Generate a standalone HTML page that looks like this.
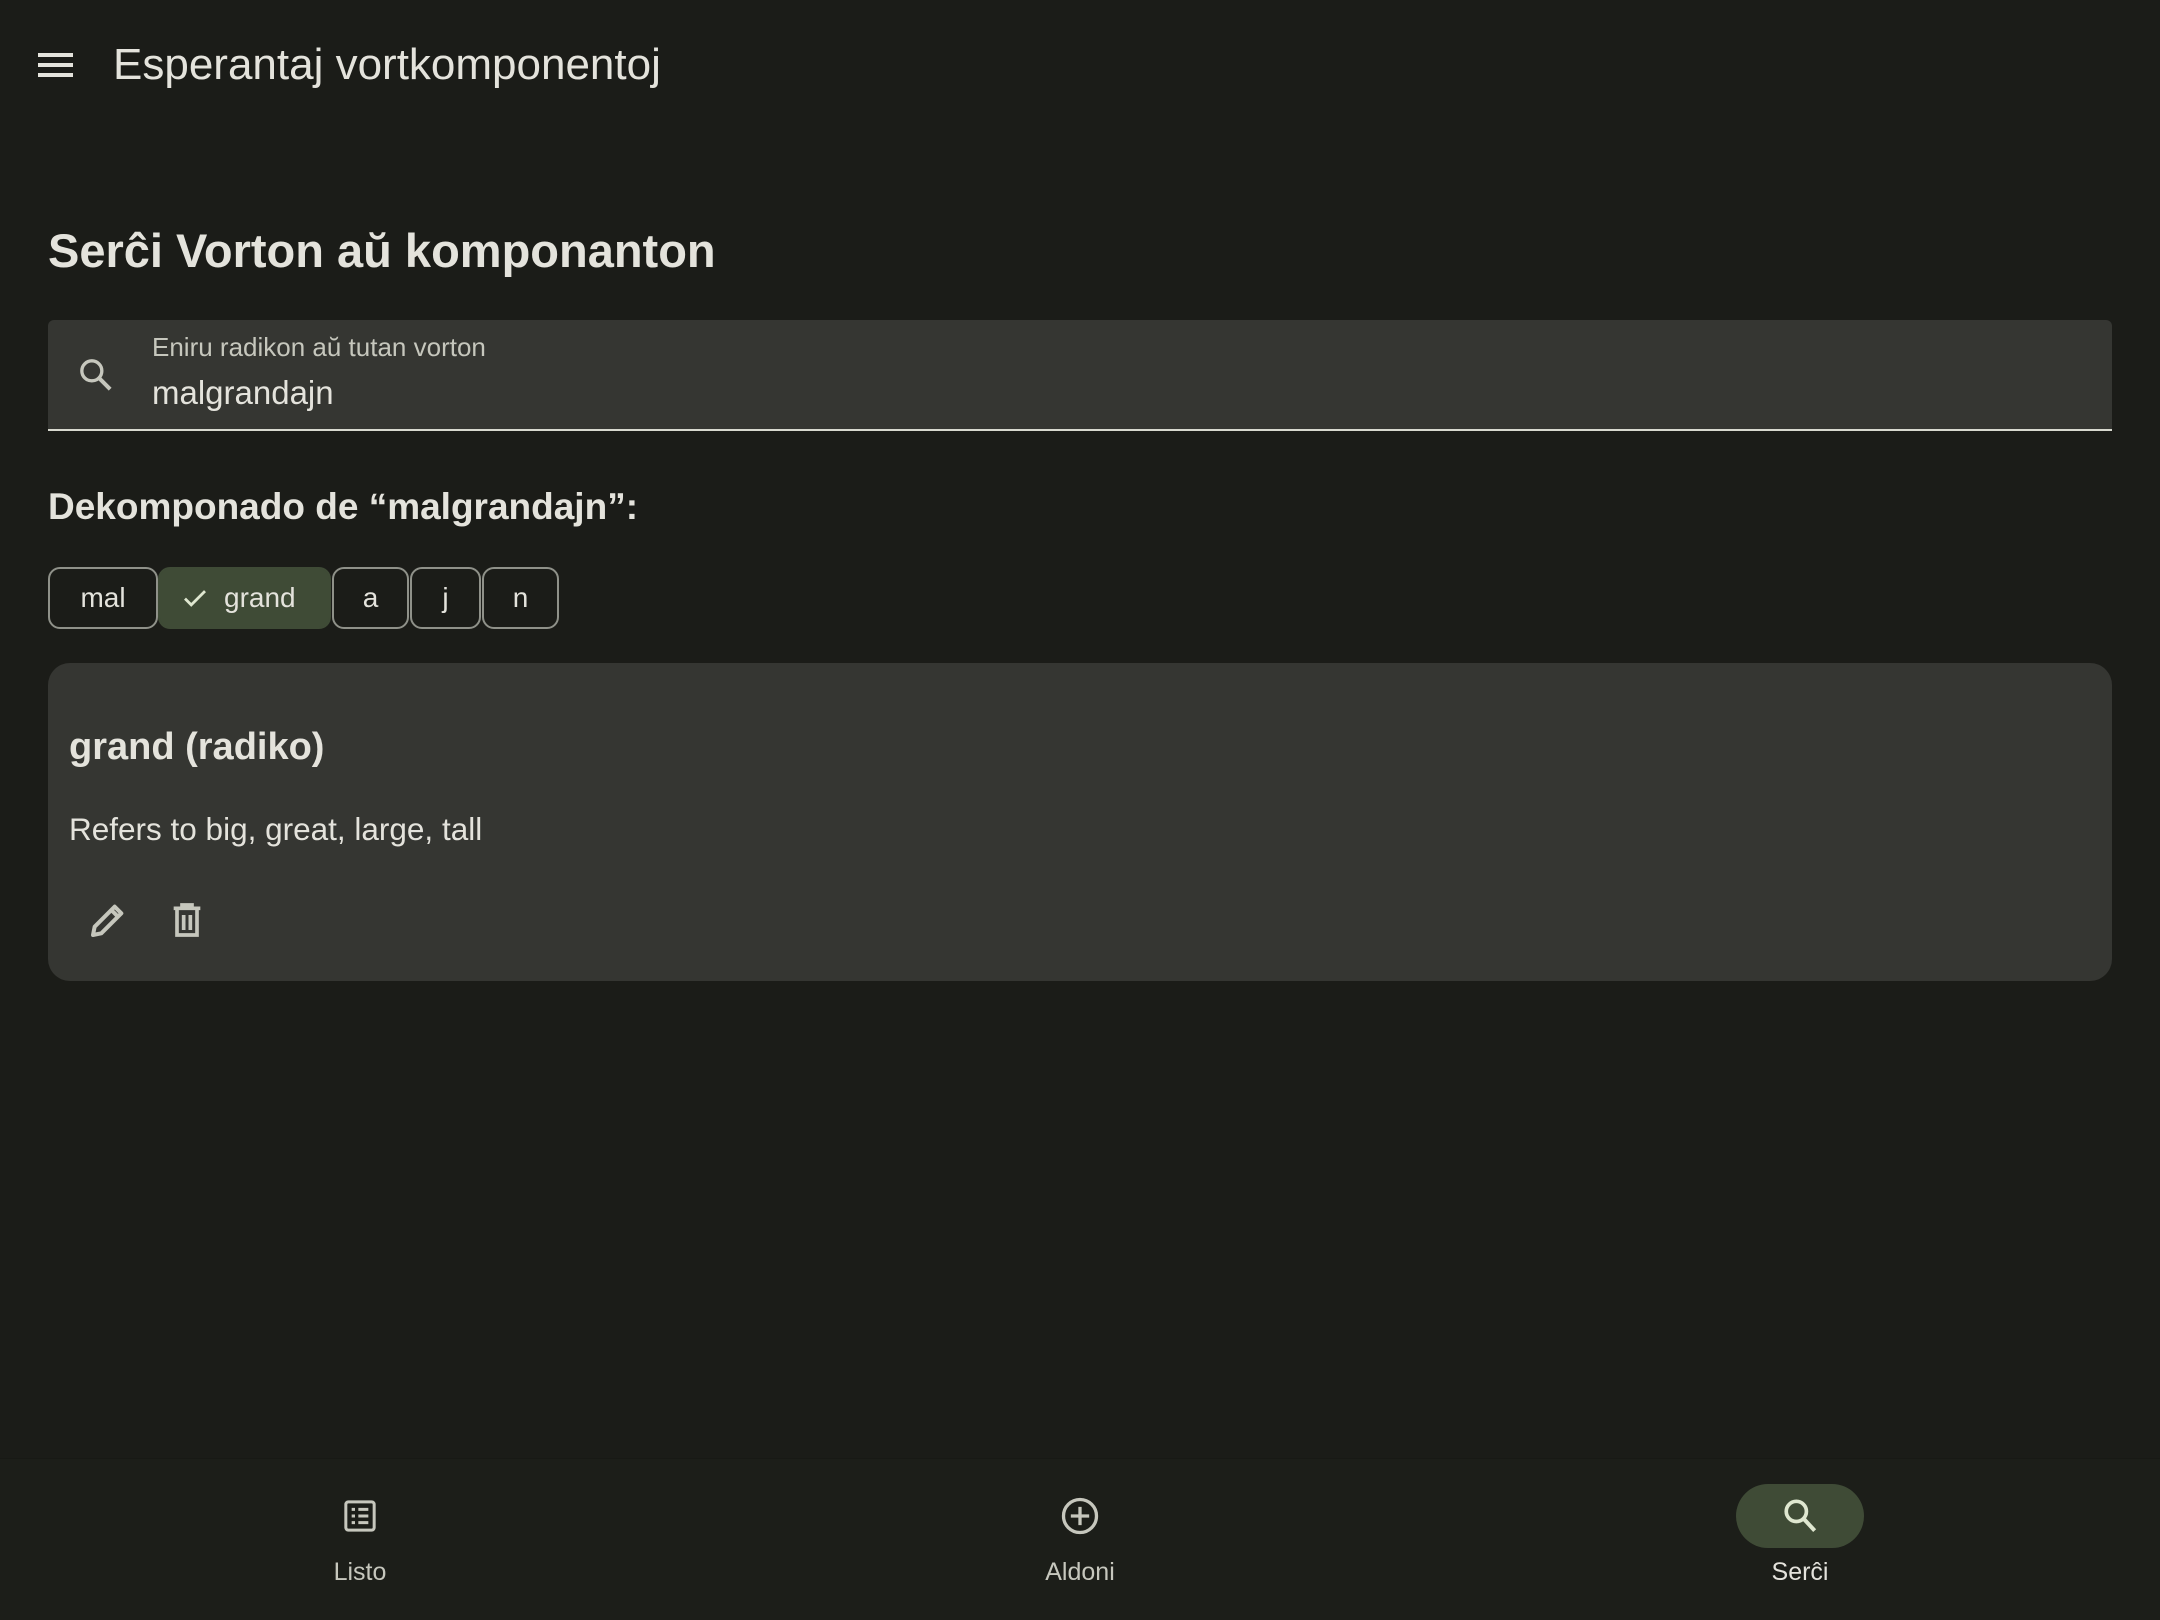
<!DOCTYPE html>
<html><head><meta charset="utf-8"><style>
*{margin:0;padding:0;box-sizing:border-box}
body{width:2160px;height:1620px;background:#1b1c18;color:#e4e3dc;font-family:"Liberation Sans",sans-serif;position:relative;overflow:hidden}
.a{position:absolute;white-space:nowrap}
.chip{position:absolute;top:567px;height:62px;border:2px solid #8f9189;border-radius:12px;font-size:28px;color:#e4e3dc;display:flex;align-items:center;justify-content:center}
</style></head><body>
<svg class="a" style="left:37px;top:51px" width="38" height="28" viewBox="0 0 38 28"><rect x="1" y="2" width="35" height="4" fill="#e4e3dc"/><rect x="1" y="12" width="35" height="4" fill="#e4e3dc"/><rect x="1" y="22" width="35" height="4" fill="#e4e3dc"/></svg>
<div class="a" style="left:113px;top:40px;font-size:44px">Esperantaj vortkomponentoj</div>
<div class="a" style="left:48px;top:223px;font-size:47px;font-weight:bold">Serĉi Vorton aŭ komponanton</div>
<div class="a" style="left:48px;top:320px;width:2064px;height:111px;background:#353632;border-radius:6px 6px 0 0;border-bottom:2px solid #d8d9cf"></div>
<svg class="a" style="left:76px;top:355px" width="40" height="40" viewBox="0 0 24 24"><circle cx="9.5" cy="9.5" r="6" fill="none" stroke="#c6c7bd" stroke-width="2"/><path d="M14 14l6.5 6.5" stroke="#c6c7bd" stroke-width="2.4"/></svg>
<div class="a" style="left:152px;top:332px;font-size:26px;color:#c6c7bd">Eniru radikon aŭ tutan vorton</div>
<div class="a" style="left:152px;top:374px;font-size:33px">malgrandajn</div>
<div class="a" style="left:48px;top:486px;font-size:37px;font-weight:bold">Dekomponado de “malgrandajn”:</div>
<div class="chip" style="left:48px;width:110px">mal</div>
<div class="chip" style="left:158px;width:173px;background:#3f4b36;border-color:#3f4b36;justify-content:flex-start;padding-left:20px"><svg width="30" height="30" viewBox="0 0 24 24"><path d="M4 12.5l5 5L20 6.5" fill="none" stroke="#dfe7d0" stroke-width="2.2"/></svg><span style="margin-left:14px">grand</span></div>
<div class="chip" style="left:332px;width:77px">a</div>
<div class="chip" style="left:410px;width:71px">j</div>
<div class="chip" style="left:482px;width:77px">n</div>
<div class="a" style="left:48px;top:663px;width:2064px;height:318px;background:#353632;border-radius:22px"></div>
<div class="a" style="left:69px;top:726px;font-size:38px;font-weight:bold">grand (radiko)</div>
<div class="a" style="left:69px;top:811px;font-size:31.5px">Refers to big, great, large, tall</div>
<svg class="a" style="left:88px;top:900px" width="40" height="40" viewBox="0 0 24 24"><path d="M3 21l1-5L16 4l4 4L8 20z M14 6l4 4" fill="none" stroke="#c6c7bd" stroke-width="2.4" stroke-linejoin="round"/></svg>
<svg class="a" style="left:167px;top:900px" width="40" height="40" viewBox="0 0 24 24"><path d="M4 5h16M9 5V3h6v2M6 5v16h12V5M10 9v9M14 9v9" fill="none" stroke="#c6c7bd" stroke-width="2.2"/></svg>
<div class="a" style="left:0;top:1458px;width:2160px;height:162px;background:#1c1e19;border-top:1px solid #181915"></div>
<svg class="a" style="left:340px;top:1496px" width="40" height="40" viewBox="0 0 24 24"><rect x="3.5" y="3.5" width="17" height="17" rx="1.5" fill="none" stroke="#c6c7bd" stroke-width="1.8"/><path d="M7 8h2M11 8h6M7 12h2M11 12h6M7 16h2M11 16h6" stroke="#c6c7bd" stroke-width="1.8"/></svg>
<div class="a" style="left:300px;top:1558px;width:120px;text-align:center;font-size:25px;color:#c6c7bd">Listo</div>
<svg class="a" style="left:1058px;top:1494px" width="44" height="44" viewBox="0 0 24 24"><circle cx="12" cy="12" r="9" fill="none" stroke="#c6c7bd" stroke-width="1.8"/><path d="M12 7v10M7 12h10" stroke="#c6c7bd" stroke-width="1.8"/></svg>
<div class="a" style="left:1020px;top:1558px;width:120px;text-align:center;font-size:25px;color:#c6c7bd">Aldoni</div>
<div class="a" style="left:1736px;top:1484px;width:128px;height:64px;border-radius:32px;background:#3f4b36"></div>
<svg class="a" style="left:1778px;top:1494px" width="44" height="44" viewBox="0 0 24 24"><circle cx="10" cy="9.5" r="5.5" fill="none" stroke="#dfe7d0" stroke-width="2"/><path d="M14 13.5l6 6.5" stroke="#dfe7d0" stroke-width="2.2"/></svg>
<div class="a" style="left:1740px;top:1558px;width:120px;text-align:center;font-size:25px;color:#e4e3dc">Serĉi</div>
</body></html>
